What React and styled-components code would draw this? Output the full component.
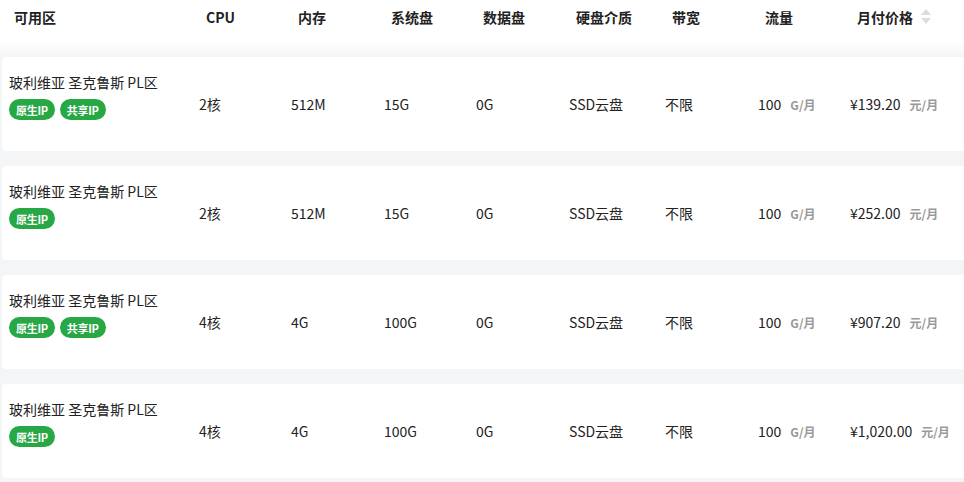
import React from 'react'
import styled, { createGlobalStyle } from 'styled-components'

const GlobalStyle = createGlobalStyle`
  html, body {
    margin: 0;
    padding: 0;
    background: #f4f5f7;
    overflow: hidden;
  }
  body {
    font-family: "Noto Sans CJK SC", "Noto Sans", sans-serif;
    color: #222;
  }
`

const cols = '197px 92px 93px 92px 93px 96px 93px 92px 1fr'

const Page = styled.div`
  width: 964px;
  height: 482px;
  overflow: hidden;
`

const Header = styled.div`
  display: grid;
  grid-template-columns: ${cols};
  height: 57px;
  padding-left: 2px;
  background: linear-gradient(to bottom, #fff 0px, #fff 42px, #f4f5f7 57px);
  box-sizing: border-box;
`

const HeadCell = styled.div`
  padding-left: ${p => (p.$first ? '12px' : '7px')};
  padding-top: 7px;
  font-size: 14px;
  font-weight: 700;
  line-height: 20px;
  color: #222;
  display: flex;
  align-items: flex-start;
`

const SortIcon = styled.span`
  display: inline-flex;
  flex-direction: column;
  margin-left: 8px;
  margin-top: 2px;
  gap: 3px;
`

const Rows = styled.div`
  display: flex;
  flex-direction: column;
  gap: 15px;
`

const Card = styled.div`
  display: grid;
  grid-template-columns: ${cols};
  align-items: center;
  height: 94px;
  margin-left: 2px;
  margin-right: -6px;
  background: #fff;
  border-radius: 4px;
  box-sizing: border-box;
`

const NameCell = styled.div`
  padding-left: 7px;
  margin-top: -16px;
`

const Name = styled.div`
  font-size: 14px;
  line-height: 20px;
  color: #222;
`

const Tags = styled.div`
  display: flex;
  gap: 5px;
  margin-top: 7px;
`

const Tag = styled.span`
  display: inline-flex;
  align-items: center;
  height: 21px;
  padding: 0 7px;
  border-radius: 11px;
  background: #28a745;
  color: #fff;
  font-size: 11px;
  font-weight: 700;
  letter-spacing: -0.3px;
`

const Cell = styled.div`
  font-size: 14px;
  line-height: 20px;
  color: #222;
  white-space: nowrap;
`

const Unit = styled.span`
  margin-left: 9px;
  font-size: 12px;
  font-weight: 700;
  color: #999;
`

const rows = [
  { tags: ['原生IP', '共享IP'], cpu: '2核', mem: '512M', sys: '15G', price: '¥139.20' },
  { tags: ['原生IP'], cpu: '2核', mem: '512M', sys: '15G', price: '¥252.00' },
  { tags: ['原生IP', '共享IP'], cpu: '4核', mem: '4G', sys: '100G', price: '¥907.20' },
  { tags: ['原生IP'], cpu: '4核', mem: '4G', sys: '100G', price: '¥1,020.00' },
]

const heads = ['可用区', 'CPU', '内存', '系统盘', '数据盘', '硬盘介质', '带宽', '流量']

const App = () => {
  return (
    <Page>
      <GlobalStyle />
      <Header>
        {heads.map((h, i) => (
          <HeadCell key={h} $first={i === 0}>{h}</HeadCell>
        ))}
        <HeadCell>
          月付价格
          <SortIcon>
            <svg width="10" height="6" viewBox="0 0 10 6"><path d="M5 0 L10 6 L0 6 Z" fill="#dcdcdc" /></svg>
            <svg width="10" height="6" viewBox="0 0 10 6"><path d="M0 0 L10 0 L5 6 Z" fill="#dcdcdc" /></svg>
          </SortIcon>
        </HeadCell>
      </Header>
      <Rows>
        {rows.map((r, i) => (
          <Card key={i}>
            <NameCell>
              <Name>玻利维亚 圣克鲁斯 PL区</Name>
              <Tags>
                {r.tags.map(t => <Tag key={t}>{t}</Tag>)}
              </Tags>
            </NameCell>
            <Cell>{r.cpu}</Cell>
            <Cell>{r.mem}</Cell>
            <Cell>{r.sys}</Cell>
            <Cell>0G</Cell>
            <Cell>SSD云盘</Cell>
            <Cell>不限</Cell>
            <Cell>100<Unit>G/月</Unit></Cell>
            <Cell>{r.price}<Unit>元/月</Unit></Cell>
          </Card>
        ))}
      </Rows>
    </Page>
  )
}

export default App
